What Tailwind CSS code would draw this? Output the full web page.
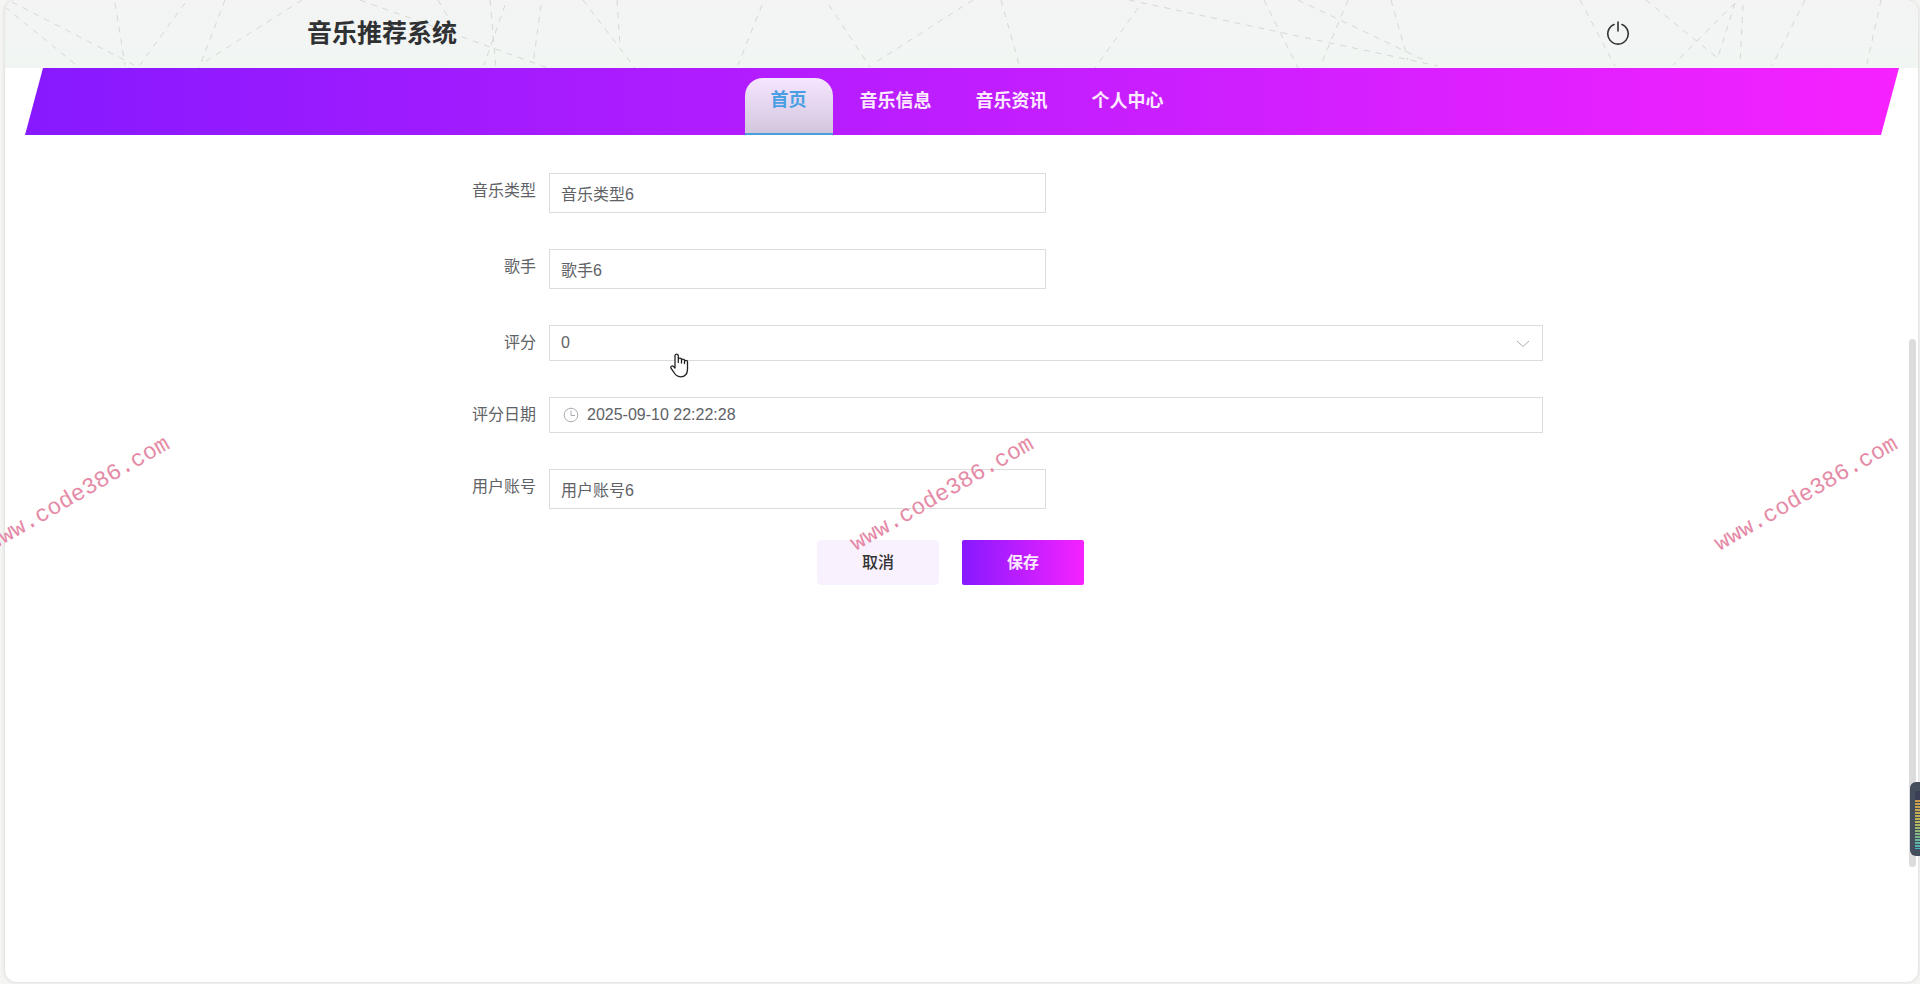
<!DOCTYPE html>
<html lang="zh-CN">
<head>
  <meta charset="UTF-8">
  <meta name="viewport" content="width=device-width, initial-scale=1.0">
  <title>音乐推荐系统</title>
  <script src="https://cdn.jsdelivr.net/npm/@tailwindcss/browser@4"></script>
</head>
<body class="relative min-h-screen flex flex-col overflow-x-hidden bg-[#f5f6f4] pl-[5px] pr-[2px] pb-[2px] font-['Liberation_Sans','Noto_Sans_CJK_SC',sans-serif] text-base text-[#606266]">
  <div class="flex-1 flex flex-col bg-white rounded-xl overflow-hidden shadow-[0_0_4px_rgba(0,0,0,0.15)]">
    <header class="relative h-[68px] shrink-0 flex items-center justify-between bg-linear-to-b from-[#f3f4f3] to-[#f1f6f3] pl-[302px] pr-[288px] pb-[2px]">
      <svg class="absolute inset-0 w-full h-full" viewBox="5 0 1913 68" preserveAspectRatio="none" fill="none" stroke="#d6d8d6" stroke-dasharray="6 6" aria-hidden="true">
        <path d="M5 7L80 68M12 2L134 65M115 3L125 65M185 3L140 65M225 0L199 68M302 0L203 63M360 0L548 68M438 0L450 20M490 0L496 68M505 5L484 65M541 5L533 65M583 0L635 68M617 0L620 45"/>
        <path d="M762 5L738 65M829 5L870 67M973 0L876 62M1001 0L1020 68M1138 8L1095 68M1129 0L1438 66M1264 0L1298 68"/>
        <path d="M1298 0L1428 62M1348 0L1322 62M1391 0L1408 60M1580 0L1615 66M1646 0L1720 60M1735 3L1673 65M1735 3L1717 60M1743 5L1740 65M1805 0L1772 66M1881 0L1867 64"/>
      </svg>
      <h1 class="relative text-[25px] leading-8 font-bold text-[#303133]">音乐推荐系统</h1>
      <button type="button" aria-label="退出" class="relative text-[#333] cursor-pointer">
        <svg width="24" height="24" viewBox="0 0 24 24" fill="none" stroke="currentColor" stroke-width="1.600" stroke-linecap="round">
          <path d="M12 1v9M8 3.500A10.200 10.200 0 1 0 16 3.500"/>
        </svg>
      </button>
    </header>

    <nav class="h-[67px] shrink-0 ml-5 mr-[19px] pl-1.5 flex items-end justify-center bg-linear-to-r/srgb from-[#8719ff] to-[#f622ff] [clip-path:polygon(18px_0,100%_0,calc(100%-18px)_100%,0_100%)] text-lg font-bold text-[#fbe9ff]">
      <a href="#" class="h-[57px] mr-[5px] px-[26px] rounded-t-[18px] border-b-2 border-[#4a9fd8] bg-linear-to-b from-[#f6e6ff] to-[#d2c6dd] text-[#4a9fe3] leading-[44px]">首页</a>
      <a href="#" class="h-[57px] px-[22px] leading-[46px]">音乐信息</a>
      <a href="#" class="h-[57px] px-[22px] leading-[46px]">音乐资讯</a>
      <a href="#" class="h-[57px] px-[22px] leading-[46px]">个人中心</a>
    </nav>

    <main class="flex-1 pt-[38px] pr-[3px]">
      <form class="max-w-[1166px] mx-auto">
        <div class="flex flex-col gap-9">
          <div class="flex">
            <label for="type" class="w-[172px] shrink-0 pr-[13px] text-right leading-9">音乐类型</label>
            <div class="flex-1">
              <input id="type" type="text" value="音乐类型6" class="block w-1/2 h-10 px-[11px] border border-[#dcdcdc] bg-white outline-none">
            </div>
          </div>
          <div class="flex">
            <label for="singer" class="w-[172px] shrink-0 pr-[13px] text-right leading-9">歌手</label>
            <div class="flex-1">
              <input id="singer" type="text" value="歌手6" class="block w-1/2 h-10 px-[11px] border border-[#dcdcdc] bg-white outline-none">
            </div>
          </div>
          <div class="flex">
            <label for="score" class="w-[172px] shrink-0 pr-[13px] text-right leading-9">评分</label>
            <div class="relative flex-1">
              <select id="score" class="block w-full h-9 px-[11px] appearance-none border border-[#dcdcdc] bg-white outline-none cursor-pointer">
                <option>0</option>
                <option>1</option>
                <option>2</option>
                <option>3</option>
                <option>4</option>
                <option>5</option>
              </select>
              <svg class="absolute right-[13px] top-3 pointer-events-none" width="14" height="14" viewBox="0 0 14 14" fill="none" stroke="#a8abb0"><path d="M1 4l6 5.500L13 4"/></svg>
            </div>
          </div>
          <div class="flex">
            <label for="date" class="w-[172px] shrink-0 pr-[13px] text-right leading-9">评分日期</label>
            <div class="relative flex-1">
              <svg class="absolute left-[14px] top-[10px]" width="16" height="16" viewBox="0 0 16 16" fill="none" stroke="#a8abb0"><circle cx="8" cy="8" r="6.800"/><path d="M8 3.500V8.500H12"/></svg>
              <input id="date" type="text" value="2025-09-10 22:22:28" class="block w-full h-9 pl-[37px] pr-3 border border-[#dcdcdc] outline-none">
            </div>
          </div>
          <div class="flex">
            <label for="account" class="w-[172px] shrink-0 pr-[13px] text-right leading-9">用户账号</label>
            <div class="flex-1">
              <input id="account" type="text" value="用户账号6" class="block w-1/2 h-10 px-[11px] border border-[#dcdcdc] bg-white outline-none">
            </div>
          </div>
        </div>
        <div class="flex justify-center gap-[23px] mt-[31px] pr-[19px]">
          <button type="button" class="w-[122px] h-[45px] rounded bg-[#faf1fe] text-[#333] font-medium cursor-pointer">取消</button>
          <button type="submit" class="w-[122px] h-[45px] rounded-xs bg-linear-to-r/srgb from-[#8719ff] to-[#f622ff] text-[#fbe9ff] font-bold cursor-pointer">保存</button>
        </div>
      </form>
    </main>
  </div>

  <!-- scrollbar thumb -->
  <div class="absolute right-1 top-[339px] w-[7px] h-[528px] rounded-sm bg-[#dcdcdc]"></div>

  <!-- volume widget docked on the right edge -->
  <div class="absolute right-0 top-[782px] w-[10px] h-[74px] rounded-l-md bg-[#454e5c] overflow-hidden">
    <svg class="absolute right-0 top-[9px]" width="5" height="58" viewBox="0 0 5 58">
      <defs>
        <linearGradient id="level" x1="0" y1="0" x2="0" y2="1">
          <stop offset="0" stop-color="#d09a4c"/>
          <stop offset=".45" stop-color="#b9b755"/>
          <stop offset="1" stop-color="#45b5bb"/>
        </linearGradient>
      </defs>
      <rect width="5" height="9" fill="#3b3f55"/>
      <rect y="9" width="5" height="49" fill="url(#level)"/>
      <path d="M2.500 11V58" stroke="#454e5c" stroke-width="5" stroke-dasharray="1 2"/>
    </svg>
  </div>

  <!-- watermark tiles -->
  <div class="absolute inset-0 pt-1 overflow-hidden pointer-events-none" aria-hidden="true">
    <div class="-ml-[353px] w-screen h-full flex items-center text-[23px] leading-none text-[#e58aa6] font-['Liberation_Mono',monospace]">
      <div class="w-[45%] shrink-0 flex justify-center"><span class="-rotate-30">www.code386.com</span></div>
      <div class="w-[45%] shrink-0 flex justify-center"><span class="-rotate-30">www.code386.com</span></div>
      <div class="w-[45%] shrink-0 flex justify-center"><span class="-rotate-30">www.code386.com</span></div>
    </div>
  </div>

  <!-- hand pointer -->
  <svg class="absolute left-[670px] top-[353px] pointer-events-none" width="19" height="25" viewBox="0 0 19 25" fill="#fff" stroke="#222" stroke-width="1.300" stroke-linejoin="round" stroke-linecap="round">
    <path d="M5 15V2.500a1.700 1.700 0 0 1 3.300 0V9.500V6.800a1.600 1.600 0 0 1 3.200 0V10V7.600a1.500 1.500 0 0 1 3 0V10.500V8.800a1.500 1.500 0 0 1 3 0V16c0 5-2.500 7.800-7 7.800-4.200 0-5.500-2.200-7-5L1 15.200c-.8-1.800 1.200-3 2.500-1.700z"/>
  </svg>
</body>
</html>
